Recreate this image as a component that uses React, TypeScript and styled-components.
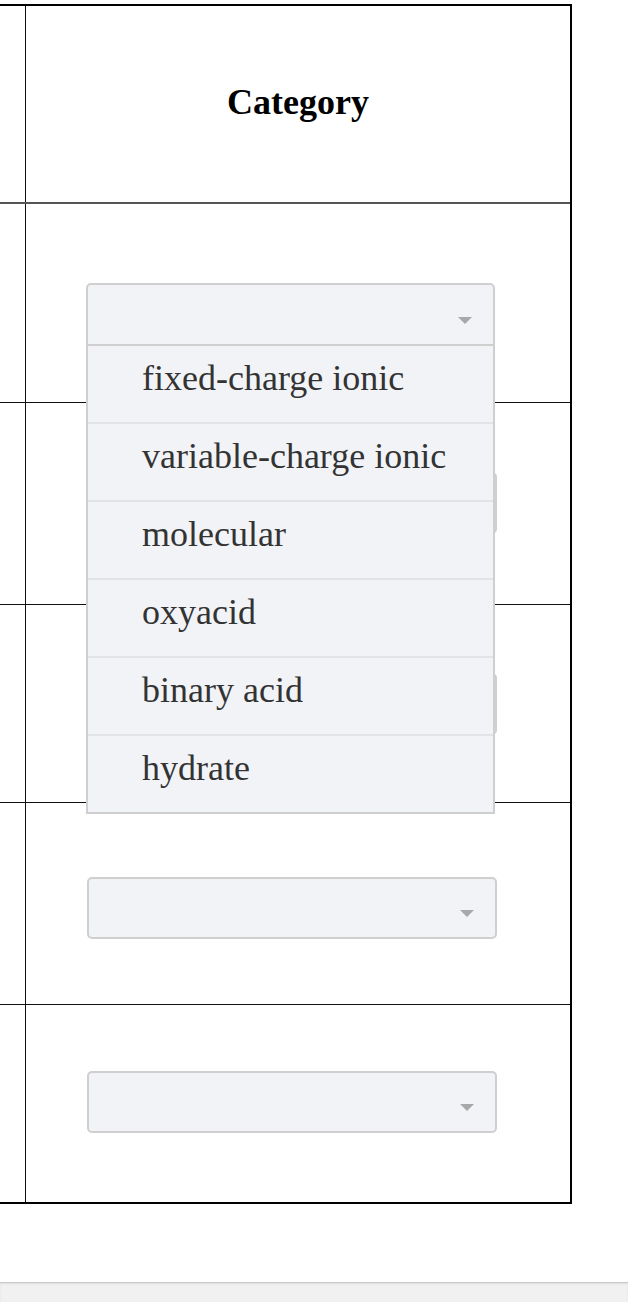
import React from "react";
import styled, { createGlobalStyle } from "styled-components";

const Global = createGlobalStyle`
  html, body { margin: 0; padding: 0; background: #fff; }
  body { font-family: "Liberation Serif", "Times New Roman", serif; }
  * { box-sizing: border-box; }
`;

const Page = styled.div`
  height: 1302px;
  display: flex;
  flex-direction: column;
  overflow: hidden;
`;

const Viewport = styled.div`
  flex: 1;
  padding-top: 4px;
  overflow: hidden;
`;

const Table = styled.div`
  width: 572px;
  border-top: 2px solid #000;
  border-right: 2px solid #000;
  border-bottom: 2px solid #000;
`;

const Row = styled.div<{ $h: number; $line: string; $lw: number }>`
  display: grid;
  grid-template-columns: 26px 1fr;
  height: ${(p) => p.$h}px;
  border-top: ${(p) => (p.$lw ? `${p.$lw}px solid ${p.$line}` : "none")};
`;

const SideCell = styled.div`
  border-right: 1px solid #111;
`;

const HeaderCell = styled.div`
  display: flex;
  align-items: center;
  justify-content: center;
  font-weight: bold;
  font-size: 36px;
  color: #000;
  padding-bottom: 4px;
`;

const BodyCell = styled.div<{ $pad: number }>`
  display: flex;
  align-items: flex-start;
  padding-top: ${(p) => p.$pad}px;
`;

const SelectWrap = styled.div<{ $open?: boolean }>`
  position: relative;
  margin-left: ${(p) => (p.$open ? 60 : 61)}px;
  width: ${(p) => (p.$open ? 409 : 410)}px;
  z-index: ${(p) => (p.$open ? 5 : 1)};
`;

const SelectBox = styled.div<{ $open?: boolean }>`
  height: ${(p) => (p.$open ? 63 : 62)}px;
  background: #f2f3f7;
  border: 2px solid #cfcfcf;
  border-radius: ${(p) => (p.$open ? "5px 5px 0 0" : "5px")};
  display: flex;
  align-items: center;
  justify-content: flex-end;
  padding-right: 21px;
`;

const Caret = styled.span`
  width: 0;
  height: 0;
  margin-top: 11px;
  border-left: 7px solid transparent;
  border-right: 7px solid transparent;
  border-top: 7px solid #a8a8a8;
`;

const Menu = styled.ul`
  position: absolute;
  top: 100%;
  left: 0;
  width: 100%;
  margin: 0;
  padding: 0;
  list-style: none;
  background: #f2f3f7;
  border-left: 2px solid #cfcfcf;
  border-right: 2px solid #cfcfcf;
`;

const MenuItem = styled.li<{ $last?: boolean }>`
  height: 78px;
  display: flex;
  align-items: center;
  padding-left: 54px;
  padding-bottom: 12px;
  font-size: 36px;
  color: #333;
  border-bottom: 2px solid ${(p) => (p.$last ? "#cfcfcf" : "#e2e3e7")};
  white-space: nowrap;
`;

const ScrollTrack = styled.div`
  height: 20px;
  flex-shrink: 0;
  background: #f1f1f1;
  border-top: 1px solid #c9c9c9;
  box-shadow: inset 0 1px 2px rgba(0, 0, 0, 0.08);
`;

const options = [
  "fixed-charge ionic",
  "variable-charge ionic",
  "molecular",
  "oxyacid",
  "binary acid",
  "hydrate",
];

const rows = [
  { h: 200, pad: 79, line: "#555", lw: 2, open: true },
  { h: 202, pad: 69, line: "#111", lw: 1, open: false },
  { h: 198, pad: 68, line: "#111", lw: 1, open: false },
  { h: 202, pad: 74, line: "#111", lw: 1, open: false },
  { h: 198, pad: 66, line: "#111", lw: 1, open: false },
];

function Select({ open }: { open?: boolean }) {
  return (
    <SelectWrap $open={open}>
      <SelectBox $open={open}>
        <Caret />
      </SelectBox>
      {open && (
        <Menu>
          {options.map((o, i) => (
            <MenuItem key={o} $last={i === options.length - 1}>
              {o}
            </MenuItem>
          ))}
        </Menu>
      )}
    </SelectWrap>
  );
}

export default function App() {
  return (
    <>
      <Global />
      <Page>
        <Viewport>
          <Table>
            <Row $h={196} $line="#000" $lw={0}>
              <SideCell />
              <HeaderCell>Category</HeaderCell>
            </Row>
            {rows.map((r, i) => (
              <Row key={i} $h={r.h} $line={r.line} $lw={r.lw}>
                <SideCell />
                <BodyCell $pad={r.pad}>
                  <Select open={r.open} />
                </BodyCell>
              </Row>
            ))}
          </Table>
        </Viewport>
        <ScrollTrack />
      </Page>
    </>
  );
}
